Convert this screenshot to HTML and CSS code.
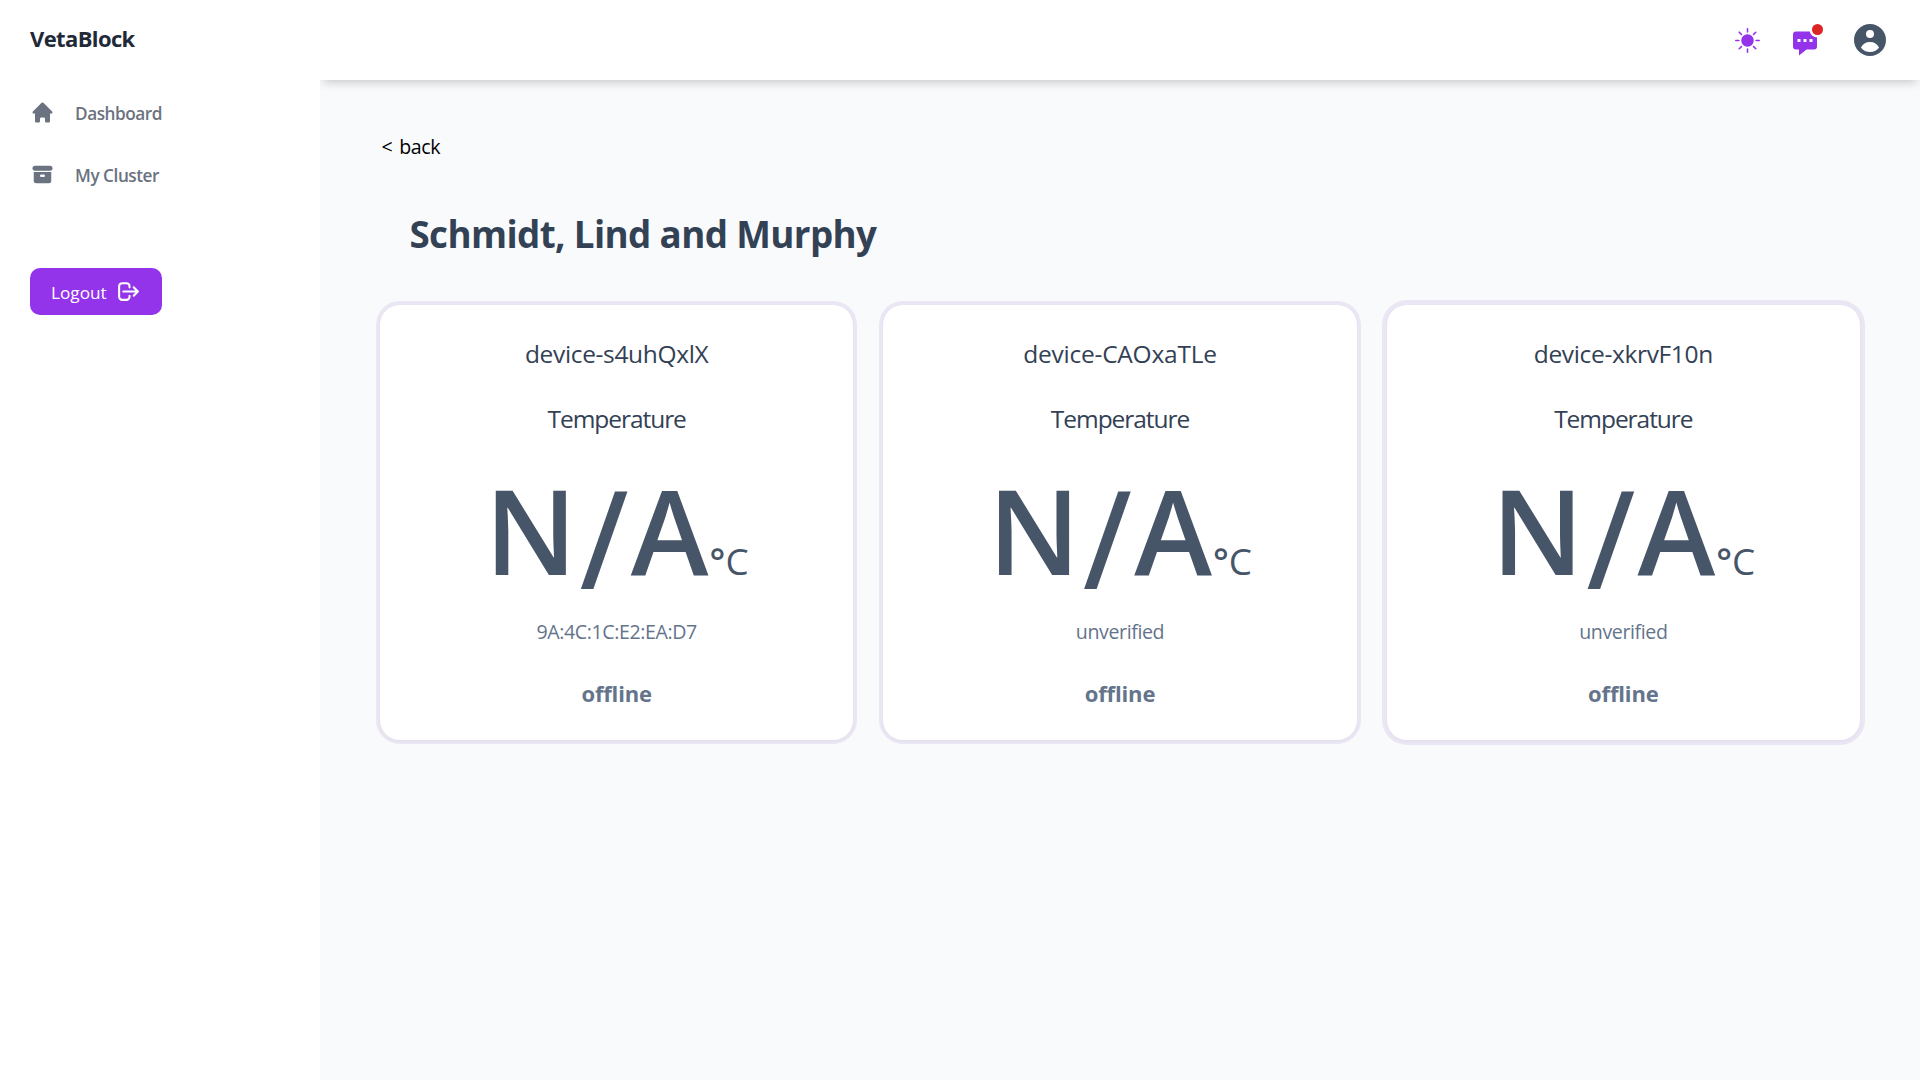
FILE: index.html
```
<!DOCTYPE html>
<html lang="en">
<head>
<meta charset="utf-8">
<title>VetaBlock</title>
<link rel="stylesheet" href="styles.css">
</head>
<body>
<div class="app">
  <aside class="sidebar">
    <a class="brand">VetaBlock</a>
    <nav class="nav">
      <a class="nav-item">
        <svg class="nav-icon" viewBox="0 0 20 20" fill="currentColor"><path d="M10.707 2.293a1 1 0 00-1.414 0l-7 7a1 1 0 001.414 1.414L4 10.414V17a1 1 0 001 1h2a1 1 0 001-1v-2a1 1 0 011-1h2a1 1 0 011 1v2a1 1 0 001 1h2a1 1 0 001-1v-6.586l.293.293a1 1 0 001.414-1.414l-7-7z"/></svg>
        <span class="nav-label">Dashboard</span>
      </a>
      <a class="nav-item">
        <svg class="nav-icon" viewBox="0 0 20 20" fill="currentColor"><path d="M4 3a2 2 0 100 4h12a2 2 0 100-4H4z"/><path fill-rule="evenodd" d="M3 8h14v7a2 2 0 01-2 2H5a2 2 0 01-2-2V8zm5 3a1 1 0 011-1h2a1 1 0 110 2H9a1 1 0 01-1-1z"/></svg>
        <span class="nav-label">My Cluster</span>
      </a>
    </nav>
    <button class="logout">
      <span class="logout-label">Logout</span>
      <svg class="logout-icon" viewBox="0 0 24 24" fill="none" stroke="currentColor" stroke-width="2" stroke-linecap="round" stroke-linejoin="round"><path d="M17 16l4-4m0 0l-4-4m4 4H7m6 4v1a3 3 0 01-3 3H6a3 3 0 01-3-3V7a3 3 0 013-3h4a3 3 0 013 3v1"/></svg>
    </button>
  </aside>
  <div class="content">
    <header class="topbar">
      <svg class="sun" viewBox="0 0 16 16" fill="currentColor"><path d="M8 12a4 4 0 1 0 0-8 4 4 0 0 0 0 8zM8 0a.5.5 0 0 1 .5.5v2a.5.5 0 0 1-1 0v-2A.5.5 0 0 1 8 0zm0 13a.5.5 0 0 1 .5.5v2a.5.5 0 0 1-1 0v-2A.5.5 0 0 1 8 13zm8-5a.5.5 0 0 1-.5.5h-2a.5.5 0 0 1 0-1h2a.5.5 0 0 1 .5.5zM3 8a.5.5 0 0 1-.5.5h-2a.5.5 0 0 1 0-1h2A.5.5 0 0 1 3 8zm10.657-5.657a.5.5 0 0 1 0 .707l-1.414 1.415a.5.5 0 1 1-.707-.708l1.414-1.414a.5.5 0 0 1 .707 0zm-9.193 9.193a.5.5 0 0 1 0 .707L3.05 13.657a.5.5 0 0 1-.707-.707l1.414-1.414a.5.5 0 0 1 .707 0zm9.193 2.121a.5.5 0 0 1-.707 0l-1.414-1.414a.5.5 0 0 1 .707-.707l1.414 1.414a.5.5 0 0 1 0 .707zM4.464 4.465a.5.5 0 0 1-.707 0L2.343 3.05a.5.5 0 1 1 .707-.707l1.414 1.414a.5.5 0 0 1 0 .708z"/></svg>
      <div class="messages">
        <svg class="chat" viewBox="0 0 20 20" fill="currentColor"><path fill-rule="evenodd" d="M18 5v8a2 2 0 01-2 2h-5l-5 4v-4H4a2 2 0 01-2-2V5a2 2 0 012-2h12a2 2 0 012 2zM7 8H5v2h2V8zm2 0h2v2H9V8zm6 0h-2v2h2V8z"/></svg>
        <span class="badge"></span>
      </div>
      <svg class="avatar" viewBox="0 0 20 20" fill="currentColor"><path fill-rule="evenodd" d="M18 10a8 8 0 11-16 0 8 8 0 0116 0zm-6-3a2 2 0 11-4 0 2 2 0 014 0zm-2 4a5 5 0 00-4.546 2.916A5.986 5.986 0 0010 16a5.986 5.986 0 004.546-2.084A5 5 0 0010 11z"/></svg>
    </header>
    <main class="main">
      <a class="back">&lt; back</a>
      <h1 class="title">Schmidt, Lind and Murphy</h1>
      <section class="devices">
        <article class="card">
          <p class="name">device-s4uhQxlX</p>
          <p class="metric">Temperature</p>
          <p class="reading"><span class="value">N<span class="slash">/</span>A</span><span class="unit"><span class="degree">°</span>C</span></p>
          <p class="address">9A:4C:1C:E2:EA:D7</p>
          <p class="status">offline</p>
        </article>
        <article class="card">
          <p class="name wide">device-CAOxaTLe</p>
          <p class="metric">Temperature</p>
          <p class="reading"><span class="value">N<span class="slash">/</span>A</span><span class="unit"><span class="degree">°</span>C</span></p>
          <p class="address">unverified</p>
          <p class="status">offline</p>
        </article>
        <article class="card card-last">
          <p class="name">device-xkrvF10n</p>
          <p class="metric">Temperature</p>
          <p class="reading"><span class="value">N<span class="slash">/</span>A</span><span class="unit"><span class="degree">°</span>C</span></p>
          <p class="address">unverified</p>
          <p class="status">offline</p>
        </article>
      </section>
    </main>
  </div>
</div>
</body>
</html>
```
FILE: styles.css
```
* { box-sizing: border-box; }
body {
  margin: 0;
  font-family: "Segoe UI", "Open Sans", "Noto Sans", sans-serif;
  background: #fff;
  color: #000;
}
p, h1 { margin: 0; }
svg { display: block; flex: none; }

.app { display: flex; height: 100vh; overflow: hidden; }

.sidebar {
  flex: none;
  width: 320px;
  padding: 21px 30px 0;
  background: #fff;
  position: relative;
  z-index: 2;
}
.brand {
  display: block;
  font-size: 22px;
  line-height: 35px;
  font-weight: 700;
  letter-spacing: -0.62px;
  color: #1f2937;
}
.nav {
  display: flex;
  flex-direction: column;
  gap: 37px;
  margin-top: 44px;
  color: #6b7280;
}
.nav-item { display: flex; gap: 20px; height: 25px; }
.nav-icon { width: 25px; height: 25px; }
.nav-label {
  padding-top: 1px;
  font-size: 17.2px;
  line-height: 25px;
  font-weight: 600;
  letter-spacing: -0.46px;
}
.logout {
  display: flex;
  align-items: center;
  gap: 9px;
  width: 132px;
  height: 47px;
  margin-top: 81px;
  padding: 0 20px 0 21px;
  border: 0;
  border-radius: 10px;
  background: #9333ea;
  color: #fff;
  font-family: inherit;
}
.logout-label { padding-top: 2px; font-size: 17.2px; line-height: 25px; }
.logout-icon { width: 25px; height: 25px; }

.content {
  flex: 1;
  display: flex;
  flex-direction: column;
  background: #f9fafc;
}
.topbar {
  flex: none;
  display: flex;
  align-items: center;
  justify-content: flex-end;
  height: 80px;
  padding: 0 30px;
  background: #fff;
  box-shadow: 0 5px 10px -3px rgba(0, 0, 0, 0.21);
}
.sun { width: 25px; height: 25px; margin-right: 30px; color: #9333ea; }
.messages { position: relative; margin: 4px 30px 0 0; color: #9333ea; }
.chat { width: 30px; height: 30px; }
.badge {
  position: absolute;
  top: -3px;
  right: -3px;
  width: 11px;
  height: 11px;
  border-radius: 50%;
  background: #dc2626;
  box-shadow: 0 0 0 2.5px #fff;
}
.avatar { width: 40px; height: 40px; color: #475569; }

.main { padding: 54px 60px 0; }
.back {
  display: block;
  padding-left: 1.5px;
  font-size: 19.6px;
  line-height: 25px;
  letter-spacing: -0.45px;
  word-spacing: 2.4px;
}
.title {
  margin-top: 53px;
  padding-left: 29.5px;
  font-size: 36.75px;
  line-height: 45px;
  font-weight: 700;
  letter-spacing: -0.62px;
  color: #334155;
}
.devices {
  display: grid;
  grid-template-columns: repeat(3, 1fr);
  gap: 30px;
  margin-top: 48px;
}
.card {
  height: 435px;
  padding-top: 31px;
  border-radius: 20px;
  background: #fff;
  text-align: center;
  box-shadow: 0 1px 3px rgba(60, 50, 120, 0.05), 0 0 0 4px #ebe6f3;
}
.card-last { box-shadow: 0 1px 3px rgba(60, 50, 120, 0.05), 0 0 0 5px #ebe6f3; }
.name, .metric { font-size: 24.5px; line-height: 35px; color: #334155; }
.name { letter-spacing: -0.34px; }
.name.wide { letter-spacing: -0.22px; }
.metric { margin-top: 30px; letter-spacing: -1.05px; }
.reading {
  display: flex;
  justify-content: center;
  align-items: baseline;
  height: 120px;
  margin-top: 33px;
  line-height: 120px;
  color: #475569;
}
.value {
  margin-right: -2px;
  font-size: 117.6px;
  font-weight: 600;
  letter-spacing: 3px;
}
/* The slash is taller than the capitals and drops below the baseline. */
.slash {
  display: inline-block;
  width: 51px;
  font-family: "Segoe UI", Roboto, sans-serif;
  font-size: 127px;
  line-height: 0;
  letter-spacing: 0;
  vertical-align: -6px;
}
.unit { font-size: 36.8px; }
.degree { font-weight: 600; }
.address {
  margin-top: 30px;
  font-size: 19.6px;
  line-height: 25px;
  letter-spacing: -0.4px;
  color: #64748b;
}
.status {
  margin-top: 32px;
  font-size: 22px;
  line-height: 35px;
  font-weight: 700;
  letter-spacing: -0.15px;
  color: #64748b;
}
```
